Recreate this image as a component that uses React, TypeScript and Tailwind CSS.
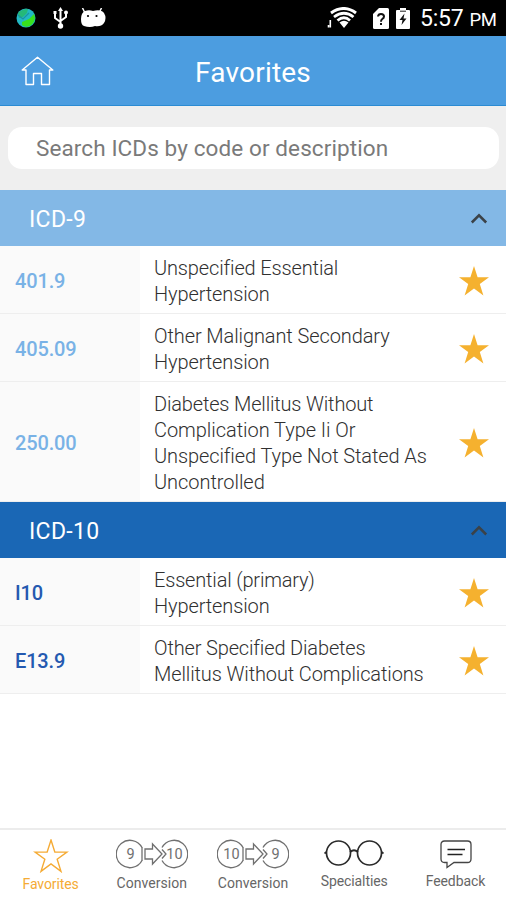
import React from "react";

const STAR = "M15 0 L18.6 11.3 L30 11.3 L20.8 18 L24.4 29.5 L15 22.4 L5.6 29.5 L9.2 18 L0 11.3 L11.4 11.3 Z";

type Item = { code: string; lines: [string, string][] };

const icd9: Item[] = [
  { code: "401.9", lines: [["Unspecified Essential", "tracking-[-0.14px]"], ["Hypertension", "tracking-[-0.12px]"]] },
  { code: "405.09", lines: [["Other Malignant Secondary", "tracking-[-0.1px]"], ["Hypertension", "tracking-[-0.12px]"]] },
  {
    code: "250.00",
    lines: [
      ["Diabetes Mellitus Without", "tracking-[-0.17px]"],
      ["Complication Type Ii Or", "tracking-[-0.05px]"],
      ["Unspecified Type Not Stated As", "tracking-[-0.1px]"],
      ["Uncontrolled", "tracking-[-0.05px]"],
    ],
  },
];
const icd10: Item[] = [
  { code: "I10", lines: [["Essential (primary)", "tracking-[-0.18px]"], ["Hypertension", "tracking-[-0.12px]"]] },
  { code: "E13.9", lines: [["Other Specified Diabetes", "tracking-[-0.15px]"], ["Mellitus Without Complications", "tracking-[-0.12px]"]] },
];

function StatusBar() {
  return (
    <div className="flex h-9 shrink-0 items-center bg-black text-white">
      <svg className="ml-4 h-5 w-5" viewBox="0 0 20 20">
        <circle cx="10" cy="10" r="9.5" fill="#22b8c4" />
        <path d="M2 5 Q6 1 12 1 L11 5 L7 9 L3 10Z" fill="#25b878" />
        <path d="M6 14 L13 11 L18 6 Q21 13 14 18 Q9 20 6 17Z" fill="#38e01e" />
        <path d="M2 7 L7 11 L13 5" fill="none" stroke="#1a93a0" strokeWidth="1.2" />
      </svg>
      <svg className="ml-[17px] h-[22px] w-[15px]" viewBox="0 0 15 22" fill="none" stroke="#fff" strokeWidth="2">
        <path d="M7.5 3 V18 M7.5 15 L2 11 V5 M7.5 14 L13 10 V5" />
        <path d="M7.5 0 L10 4 H5Z M.5 4 H3.5 V7 H.5Z" fill="#fff" stroke="none" />
        <circle cx="7.5" cy="19" r="2.7" fill="#fff" stroke="none" />
        <circle cx="13" cy="5.5" r="2" fill="#fff" stroke="none" />
      </svg>
      <svg className="ml-[13px] h-5 w-[25px]" viewBox="0 0 25 20">
        <path d="M4 3 Q8 1.6 12 3 Q20 1 23 5 Q26 10 23 15 Q20 19 14 18 Q9 20 3 18 Q0 17 0 11 Q0 5 4 3Z" fill="#fff" />
        <path d="M1.5 0 L4 5 M20.5 0 L18.5 4" stroke="#fff" strokeWidth="1.5" />
        <circle cx="7" cy="8" r="1.1" />
        <circle cx="15.5" cy="8" r="1.1" />
      </svg>
      <svg className="ml-[221px] h-[22px] w-[31px]" viewBox="0 0 31 22" fill="none" stroke="#fff">
        <path d="M4 6 Q17 -3 29 6" strokeWidth="3" />
        <path d="M7 10 Q17 2.500 26.500 10 M10.500 13.500 Q17 8 23 13.500" strokeWidth="2.800" />
        <path d="M12.500 15.500 Q17 12 21.500 15.500 L17 21Z" fill="#fff" stroke="none" />
        <path d="M1.500 18 V20.500 M3.300 13 V20.500" strokeWidth="1.600" />
      </svg>
      <svg className="ml-[15px] h-[21px] w-4" viewBox="0 0 16 21">
        <path d="M6 0 H14.500 Q16 0 16 1.500 V19.500 Q16 21 14.500 21 H1.500 Q0 21 0 19.500 V6Z" fill="#fff" />
        <path d="M5 8.500 Q5.300 6 8 6 Q11 6 11 8.500 Q11 10 9.300 11 Q8 12 8 13.700 M8 15 V17" fill="none" stroke="#111" strokeWidth="2" />
      </svg>
      <svg className="ml-[7px] h-[21px] w-[14px]" viewBox="0 0 14 21">
        <path d="M1 2 H4 V0 H10 V2 H13 Q14 2 14 3 V20 Q14 21 13 21 H1 Q0 21 0 20 V3 Q0 2 1 2Z" fill="#fff" />
        <path d="M4 3.200 H10" stroke="#222" />
        <path d="M8.500 5.500 L3.500 12 H6.500 L5.500 17 L10.500 10.500 H7.500Z" fill="#111" />
      </svg>
      <div className="ml-[10px] flex items-baseline whitespace-nowrap pt-[3px] leading-9">
        <span className="text-[23px] tracking-[-0.2px]">5:57</span>
        <span className="ml-[6px] text-[18.500px] tracking-[-0.4px]">PM</span>
      </div>
    </div>
  );
}

function SectionHeader({ title, tone }: { title: string; tone: string }) {
  return (
    <div className={`flex shrink-0 items-center justify-between pl-[29px] pr-[18px] text-white ${tone}`}>
      <span className="pt-[3px] text-[23px] leading-none tracking-[0.350px]">{title}</span>
      <svg className="h-[11px] w-[18px]" viewBox="0 0 18 11" fill="none" stroke="#3b4248" strokeWidth="2.500">
        <path d="M1.800 9.500 L9 2.300 L16.200 9.500" />
      </svg>
    </div>
  );
}

function Row({ item, tone }: { item: Item; tone: string }) {
  return (
    <div className="flex border-b border-[#eeeeee] bg-white">
      <div className={`flex w-[140px] shrink-0 items-center bg-[#fafafa] pl-[15px] text-[20px] font-medium ${tone}`}>
        <span className="pt-[3px] tracking-[-0.150px]">{item.code}</span>
      </div>
      <div className="flex grow flex-col justify-center pb-[6px] pl-[14px] pt-[9px] text-[20px] font-light leading-[26px] text-[#303030]">
        {item.lines.map(([text, spacing]) => (
          <span key={text} className={`whitespace-nowrap ${spacing}`}>{text}</span>
        ))}
      </div>
      <div className="flex w-[47px] shrink-0 items-center pt-[3px]">
        <svg className="h-[30px] w-[30px]" viewBox="0 0 30 30"><path d={STAR} fill="#f5b12f" /></svg>
      </div>
    </div>
  );
}

function ConversionIcon({ from, to }: { from: string; to: string }) {
  return (
    <svg className="h-[30px] w-[72px]" viewBox="0 0 72 30" fill="none" stroke="#707070" strokeWidth="1.300">
      <path d="M26 8.500 A13.700 13.700 0 1 0 26 21.500 M46 8.500 A13.700 13.700 0 1 1 46 21.500" />
      <path d="M29 10 H36.500 V5 L46 15 L36.500 25 V20 H29Z M26 8 V22 M46 10.500 L50 15 L46 19.500" />
      <g fill="#707070" stroke="none" fontSize="14.500" textAnchor="middle" fontFamily="Roboto, sans-serif">
        <text x="14.500" y="20">{from}</text>
        <text x="58.500" y="20">{to}</text>
      </g>
    </svg>
  );
}

function Tab({ label, icon, active = false, raised = false }: { label: string; icon: React.ReactNode; active?: boolean; raised?: boolean }) {
  return (
    <div className={`flex flex-1 flex-col items-center ${active ? "text-[#f5ab35]" : "text-[#666]"}`}>
      <div className="mt-[9px] flex h-[30px] items-center">{icon}</div>
      <span className={`text-[14px] leading-4 ${raised ? "mt-[4px]" : active ? "mt-[7px]" : "mt-[6px]"} ${label === "Conversion" ? "tracking-[0.05px]" : "tracking-[-0.1px]"}`}>{label}</span>
    </div>
  );
}

export default function App() {
  return (
    <div className="flex h-[900px] w-[506px] flex-col overflow-hidden bg-white font-['Roboto',sans-serif]">
      <StatusBar />
      <header className="grid h-[70px] shrink-0 grid-cols-[1fr_auto_1fr] items-center border-b border-[#2b8bd3] bg-[#4c9de0] text-white">
        <svg className="ml-[21px] h-[30px] w-[33px]" viewBox="0 0 33 30" fill="none" stroke="#fff" strokeWidth="1.400">
          <path d="M5 14 H1.200 L16.500 1.200 L31.800 14 H28.500 V28.500 H20.500 V17.500 H12.500 V28.500 H5Z" strokeLinejoin="round" />
        </svg>
        <h1 className="pt-[4px] text-[28px] leading-none tracking-[0.200px]">Favorites</h1>
      </header>
      <div className="h-[84px] shrink-0 bg-[#efefef] pl-2 pr-[7px] pt-[21px]">
        <div className="flex h-[42px] items-center rounded-[14px] bg-white pl-7 text-[22.500px] tracking-[0.100px] text-[#7a7a7a]">
          <span className="pt-[2px]">Search ICDs by code or description</span>
        </div>
      </div>
      <SectionHeader title="ICD-9" tone="h-14 bg-[#83b8e6]" />
      {icd9.map((item) => <Row key={item.code} item={item} tone="text-[#79b2e6]" />)}
      <SectionHeader title="ICD-10" tone="h-14 bg-[#1a67b5]" />
      {icd10.map((item) => <Row key={item.code} item={item} tone="text-[#2459b0]" />)}
      <nav className="mt-auto flex h-[72px] shrink-0 border-t-2 border-[#ececec] bg-white">
        <Tab active label="Favorites" icon={
          <svg className="mt-[3px] h-[34px] w-[36px]" viewBox="-1 -1 32 32"><path d={STAR} fill="none" stroke="#f5ab35" strokeWidth="1.300" /></svg>
        } />
        <Tab label="Conversion" icon={<ConversionIcon from="9" to="10" />} />
        <Tab label="Conversion" icon={<ConversionIcon from="10" to="9" />} />
        <Tab raised label="Specialties" icon={
          <svg className="h-[28px] w-[60px]" viewBox="0 0 60 28" fill="none" stroke="#2a2a2a" strokeWidth="1.700">
            <circle cx="14.500" cy="13" r="12" /><circle cx="45.500" cy="13" r="12" />
            <path d="M26 12 Q30 8.500 34 12 M2.500 12 L.5 13.500 M57.500 12 L59.500 13.500" />
          </svg>
        } />
        <Tab raised label="Feedback" icon={
          <svg className="ml-[2px] h-[29px] w-[32px]" viewBox="0 0 32 29" fill="none" stroke="#444" strokeWidth="1.300">
            <path d="M4.500 1 H27.500 Q31 1 31 4.500 V19 Q31 22.500 27.500 22.500 H14 L7 27.500 V22.500 H4.500 Q1 22.500 1 19 V4.500 Q1 1 4.500 1Z" />
            <path d="M7.500 9.500 H25 M7.500 14.500 H22.500" stroke="#222" strokeWidth="1.700" />
          </svg>
        } />
      </nav>
    </div>
  );
}
